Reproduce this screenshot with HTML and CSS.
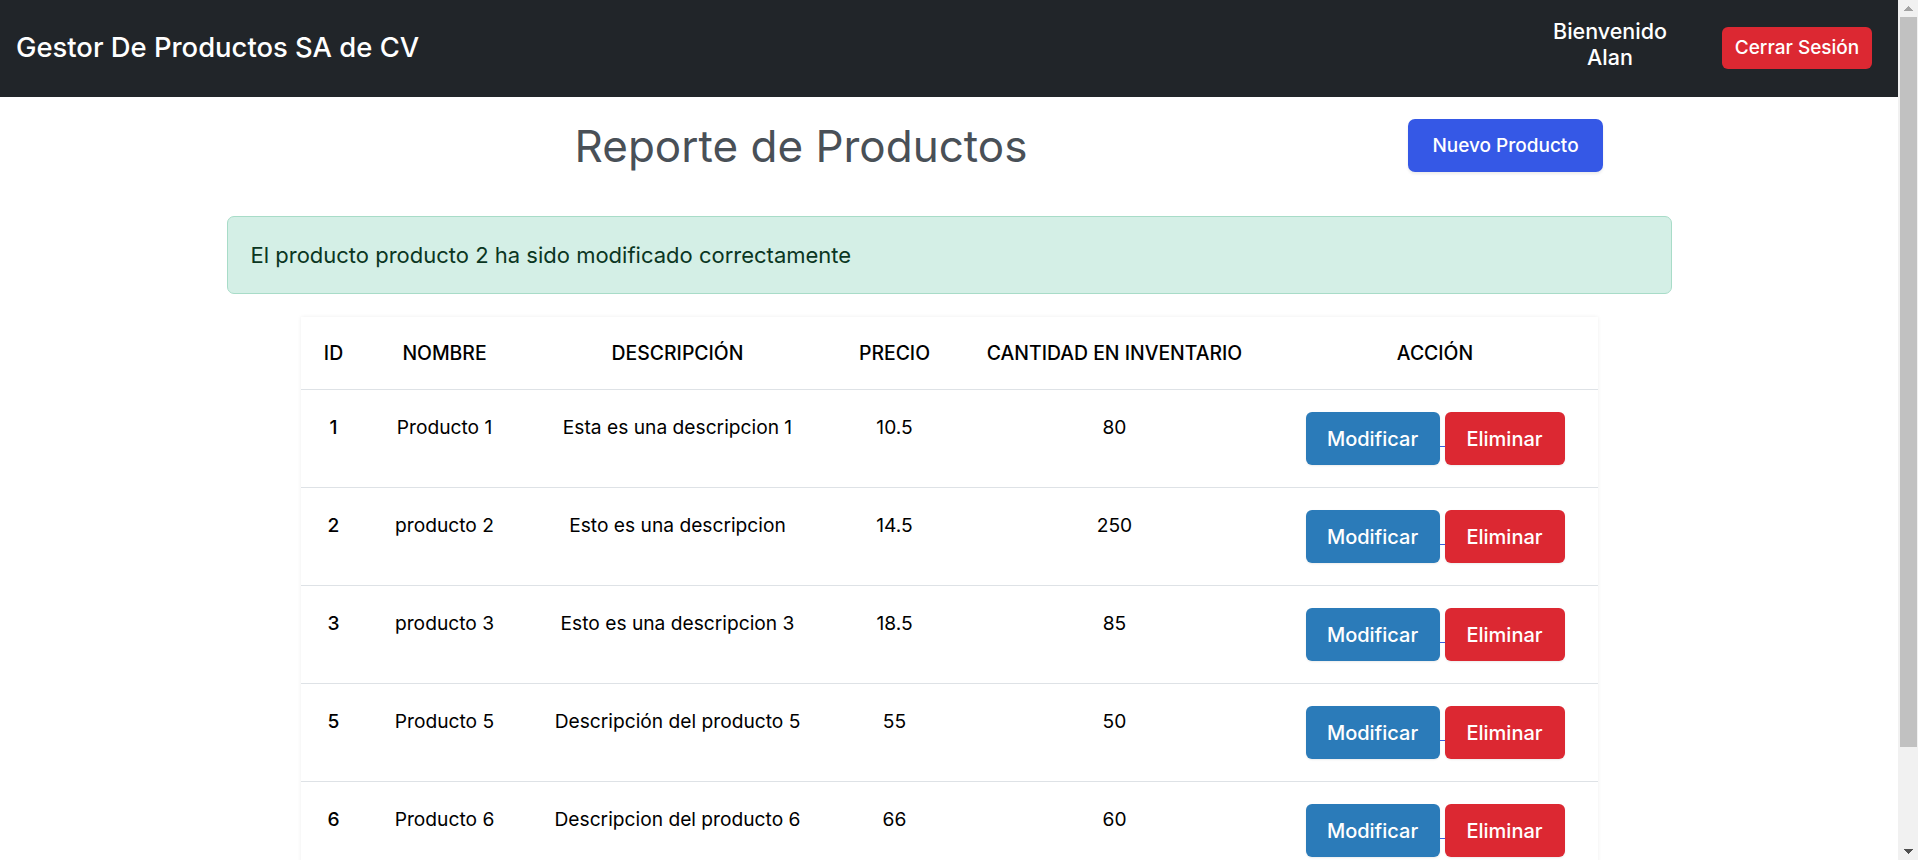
FILE: index.html
```html
<!DOCTYPE html>
<html lang="es">
<head>
<meta charset="utf-8">
<title>Reporte de Productos</title>
<link rel="stylesheet" href="styles.css">
</head>
<body>
<header class="navbar">
  <div class="brand">Gestor De Productos SA de CV</div>
  <div class="nav-right">
    <div class="welcome">Bienvenido<br>Alan</div>
    <button class="btn btn-logout">Cerrar Sesión</button>
  </div>
</header>
<main class="page">
  <div class="toolbar">
    <div class="title-col"><h1 class="title">Reporte de Productos</h1></div>
    <button class="btn btn-new">Nuevo Producto</button>
  </div>
  <div class="alert">El producto producto 2 ha sido modificado correctamente</div>
  <div class="card">
    <table class="products">
      <colgroup>
        <col class="c-id"><col class="c-name"><col class="c-desc"><col class="c-price"><col class="c-qty"><col class="c-act">
      </colgroup>
      <thead>
        <tr><th>ID</th><th>NOMBRE</th><th>DESCRIPCIÓN</th><th>PRECIO</th><th>CANTIDAD EN INVENTARIO</th><th>ACCIÓN</th></tr>
      </thead>
      <tbody>
        <tr><td class="id">1</td><td>Producto 1</td><td>Esta es una descripcion 1</td><td>10.5</td><td>80</td>
          <td><div class="actions"><button class="btn btn-mod">Modificar</button><span class="link-gap"></span><button class="btn btn-del">Eliminar</button></div></td></tr>
        <tr><td class="id">2</td><td>producto 2</td><td>Esto es una descripcion</td><td>14.5</td><td>250</td>
          <td><div class="actions"><button class="btn btn-mod">Modificar</button><span class="link-gap"></span><button class="btn btn-del">Eliminar</button></div></td></tr>
        <tr><td class="id">3</td><td>producto 3</td><td>Esto es una descripcion 3</td><td>18.5</td><td>85</td>
          <td><div class="actions"><button class="btn btn-mod">Modificar</button><span class="link-gap"></span><button class="btn btn-del">Eliminar</button></div></td></tr>
        <tr><td class="id">5</td><td>Producto 5</td><td>Descripción del producto 5</td><td>55</td><td>50</td>
          <td><div class="actions"><button class="btn btn-mod">Modificar</button><span class="link-gap"></span><button class="btn btn-del">Eliminar</button></div></td></tr>
        <tr><td class="id">6</td><td>Producto 6</td><td>Descripcion del producto 6</td><td>66</td><td>60</td>
          <td><div class="actions"><button class="btn btn-mod">Modificar</button><span class="link-gap"></span><button class="btn btn-del">Eliminar</button></div></td></tr>
      </tbody>
    </table>
  </div>
</main>
<div class="scrollbar" aria-hidden="true">
  <div class="sb-arrow sb-up"></div>
  <div class="sb-track"><div class="sb-thumb"></div></div>
  <div class="sb-arrow sb-down"></div>
</div>
</body>
</html>
```
FILE: styles.css
```css
html {
  scrollbar-width: none;
}
html, body {
  margin: 0;
  padding: 0;
}
body {
  font-family: Inter, "Noto Sans", "Liberation Sans", sans-serif;
  color: #000;
  background: #fff;
  margin-right: 20px;
}

/* window scrollbar drawn over the right edge */
.scrollbar {
  position: fixed;
  top: 0;
  right: 0;
  width: 20px;
  height: 100vh;
  background: #f1f1f1;
  display: flex;
  flex-direction: column;
}
.sb-arrow {
  height: 17px;
  flex: 0 0 17px;
  background-repeat: no-repeat;
  background-size: 9px 5px;
  background-position: center;
}
.sb-up {
  background-image: conic-gradient(from 135deg at 50% 0, #a3a3a3 90deg, transparent 0);
}
.sb-down {
  background-image: conic-gradient(from -45deg at 50% 100%, #505050 90deg, transparent 0);
}
.sb-track {
  flex: 1;
  padding: 0 1px 0 2px;
}
.sb-thumb {
  height: 730px;
  background: #c1c1c1;
}

.navbar {
  height: 97px;
  background: #212529;
  display: flex;
  align-items: center;
  justify-content: space-between;
  padding: 0 26px 0 16px;
  color: #fff;
}
.brand {
  font-size: 27.4px;
  font-weight: 500;
  margin-top: -3px;
}
.nav-right {
  display: flex;
  align-items: center;
  gap: 55px;
}
.welcome {
  font-size: 21.5px;
  font-weight: 500;
  line-height: 25.6px;
  text-align: center;
  margin-top: -8px;
}
.btn {
  font-family: inherit;
  border: none;
  color: #fff;
  cursor: pointer;
}
.btn-logout {
  background: #dc2832;
  font-size: 19px;
  font-weight: 500;
  width: 150px;
  height: 42px;
  padding: 0;
  border-radius: 6px;
  margin-top: -2px;
}

.page {
  padding-bottom: 95px;
}
.toolbar {
  display: flex;
  align-items: center;
  margin-top: 22px;
}
.title-col {
  flex: 0 0 auto;
  width: 1190px;
  padding-left: 206px;
  text-align: center;
}
.title {
  margin: 0;
  font-size: 44px;
  font-weight: 400;
  color: #495057;
  line-height: 52px;
}
.btn-new {
  margin-left: 12px;
  width: 195px;
  height: 53px;
  background: #3558e6;
  font-size: 19px;
  font-weight: 500;
  border-radius: 7px;
  box-shadow: 0 2px 3px rgba(0, 0, 0, 0.08);
}

.alert {
  width: 1445px;
  box-sizing: border-box;
  margin: 44px auto 0;
  height: 78px;
  display: flex;
  align-items: center;
  padding: 0 23px;
  background: #d4efe6;
  border: 1px solid #a8dcc8;
  border-radius: 7px;
  color: #0a3622;
  font-size: 22px;
}

.card {
  width: 1297px;
  margin: 23px auto 0;
  background: #fff;
  box-shadow: 0 0 4px rgba(0, 0, 0, 0.07);
}
.products {
  width: 100%;
  border-collapse: collapse;
  table-layout: fixed;
}
.c-id { width: 66px; }
.c-name { width: 156px; }
.c-desc { width: 310px; }
.c-price { width: 124px; }
.c-qty { width: 316px; }
.c-act { width: 325px; }
.products th {
  font-size: 19.4px;
  font-weight: 500;
  line-height: 25px;
  padding: 24px 2px 23px;
  border-bottom: 1px solid #dee2e6;
  text-align: center;
}
.products td {
  font-size: 19.2px;
  line-height: 30px;
  padding: 22px 2px;
  vertical-align: top;
  text-align: center;
  border-bottom: 1px solid #dee2e6;
}
.products td.id {
  font-weight: 500;
}
.actions {
  display: flex;
  justify-content: center;
  align-items: flex-start;
}
.link-gap {
  width: 5px;
  height: 1px;
  margin-top: 34px;
  background: #3a5fe0;
}
.btn-mod, .btn-del {
  height: 53px;
  font-size: 20px;
  font-weight: 500;
  border-radius: 6px;
  box-shadow: 0 1px 2px rgba(0, 0, 0, 0.08);
}
.btn-mod {
  width: 134px;
  background: #2b7bb9;
}
.btn-del {
  width: 120px;
  background: #dc2832;
}
```
